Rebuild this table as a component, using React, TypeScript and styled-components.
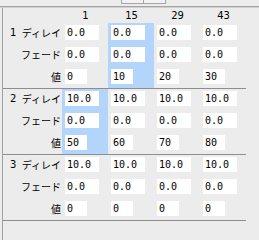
import styled, { createGlobalStyle } from 'styled-components';

const GlobalStyle = createGlobalStyle`
  html, body {
    margin: 0;
    padding: 0;
    background: #ececec;
  }
  body {
    font-family: "DejaVu Sans", "Noto Sans CJK JP", sans-serif;
    color: #000;
  }
`;

const Window = styled.div`
  width: 259px;
  height: 240px;
  background: #ececec;
  overflow: hidden;
`;

const TopBar = styled.div`
  height: 6px;
  overflow: hidden;
  display: flex;
  padding-left: 121px;
  border-bottom: 1px solid #a4a4a4;
  box-shadow: 0 1px 0 #cfcfcf;
  margin-bottom: 1px;
`;

const ToolButton = styled.div`
  width: 21px;
  height: 20px;
  margin-top: -18px;
  background: #f2f2f2;
  border: 1px solid #a6a6a6;
  & + & {
    border-left: none;
  }
`;

const Panel = styled.div`
  margin-left: 2px;
  border-left: 1px solid #a0a0a0;
  height: 232px;
`;

const HeaderRow = styled.div`
  display: flex;
  height: 15px;
  padding-left: 59px;
`;

const ColumnTitle = styled.div`
  width: 46px;
  text-align: center;
  font-family: "DejaVu Sans", sans-serif;
  font-size: 10px;
  line-height: 15px;
  padding-left: 1px;
  box-sizing: border-box;
`;

const Group = styled.div`
  display: flex;
  width: 243px;
  height: 65px;
  border-bottom: 1px solid #8e8e8e;
`;

const LabelColumn = styled.div`
  width: 59px;
  display: flex;
  flex-direction: column;
  gap: 7px;
  padding-top: 2px;
`;

const LabelRow = styled.div`
  display: flex;
  justify-content: space-between;
  align-items: center;
  height: 15px;
  padding: 0 1px 0 7px;
  font-family: "Noto Sans CJK JP", sans-serif;
  font-size: 10px;
  line-height: 15px;
`;

const RowNumber = styled.span`
  font-family: "DejaVu Sans", sans-serif;
`;

const Cell = styled.div<{ $selected: boolean }>`
  width: 46px;
  display: flex;
  flex-direction: column;
  gap: 7px;
  padding: 2px 0 0 3px;
  box-sizing: border-box;
  background: ${p => (p.$selected ? '#b3d5fc' : 'transparent')};
`;

const Field = styled.div<{ $narrow?: boolean }>`
  width: ${p => (p.$narrow ? '22px' : '34px')};
  height: 15px;
  background: #fff;
  padding-left: 2px;
  box-sizing: border-box;
  font-family: "DejaVu Sans Mono", monospace;
  font-size: 10px;
  line-height: 15px;
  white-space: nowrap;
  overflow: hidden;
`;

const columns = ['1', '15', '29', '43'];

const groups = [
  { n: '1', delay: ['0.0', '0.0', '0.0', '0.0'], fade: ['0.0', '0.0', '0.0', '0.0'], value: ['0', '10', '20', '30'], selected: 1 },
  { n: '2', delay: ['10.0', '10.0', '10.0', '10.0'], fade: ['0.0', '0.0', '0.0', '0.0'], value: ['50', '60', '70', '80'], selected: 0 },
  { n: '3', delay: ['10.0', '10.0', '10.0', '10.0'], fade: ['0.0', '0.0', '0.0', '0.0'], value: ['0', '0', '0', '0'], selected: -1 },
];

export default function App() {
  return (
    <Window>
      <GlobalStyle />
      <TopBar>
        <ToolButton />
        <ToolButton />
      </TopBar>
      <Panel>
        <HeaderRow>
          {columns.map(c => (
            <ColumnTitle key={c}>{c}</ColumnTitle>
          ))}
        </HeaderRow>
        {groups.map(g => (
          <Group key={g.n}>
            <LabelColumn>
              <LabelRow>
                <RowNumber>{g.n}</RowNumber>
                <span>ディレイ</span>
              </LabelRow>
              <LabelRow>
                <span />
                <span>フェード</span>
              </LabelRow>
              <LabelRow>
                <span />
                <span>値</span>
              </LabelRow>
            </LabelColumn>
            {columns.map((c, i) => (
              <Cell key={c} $selected={g.selected === i}>
                <Field>{g.delay[i]}</Field>
                <Field>{g.fade[i]}</Field>
                <Field $narrow>{g.value[i]}</Field>
              </Cell>
            ))}
          </Group>
        ))}
      </Panel>
    </Window>
  );
}
